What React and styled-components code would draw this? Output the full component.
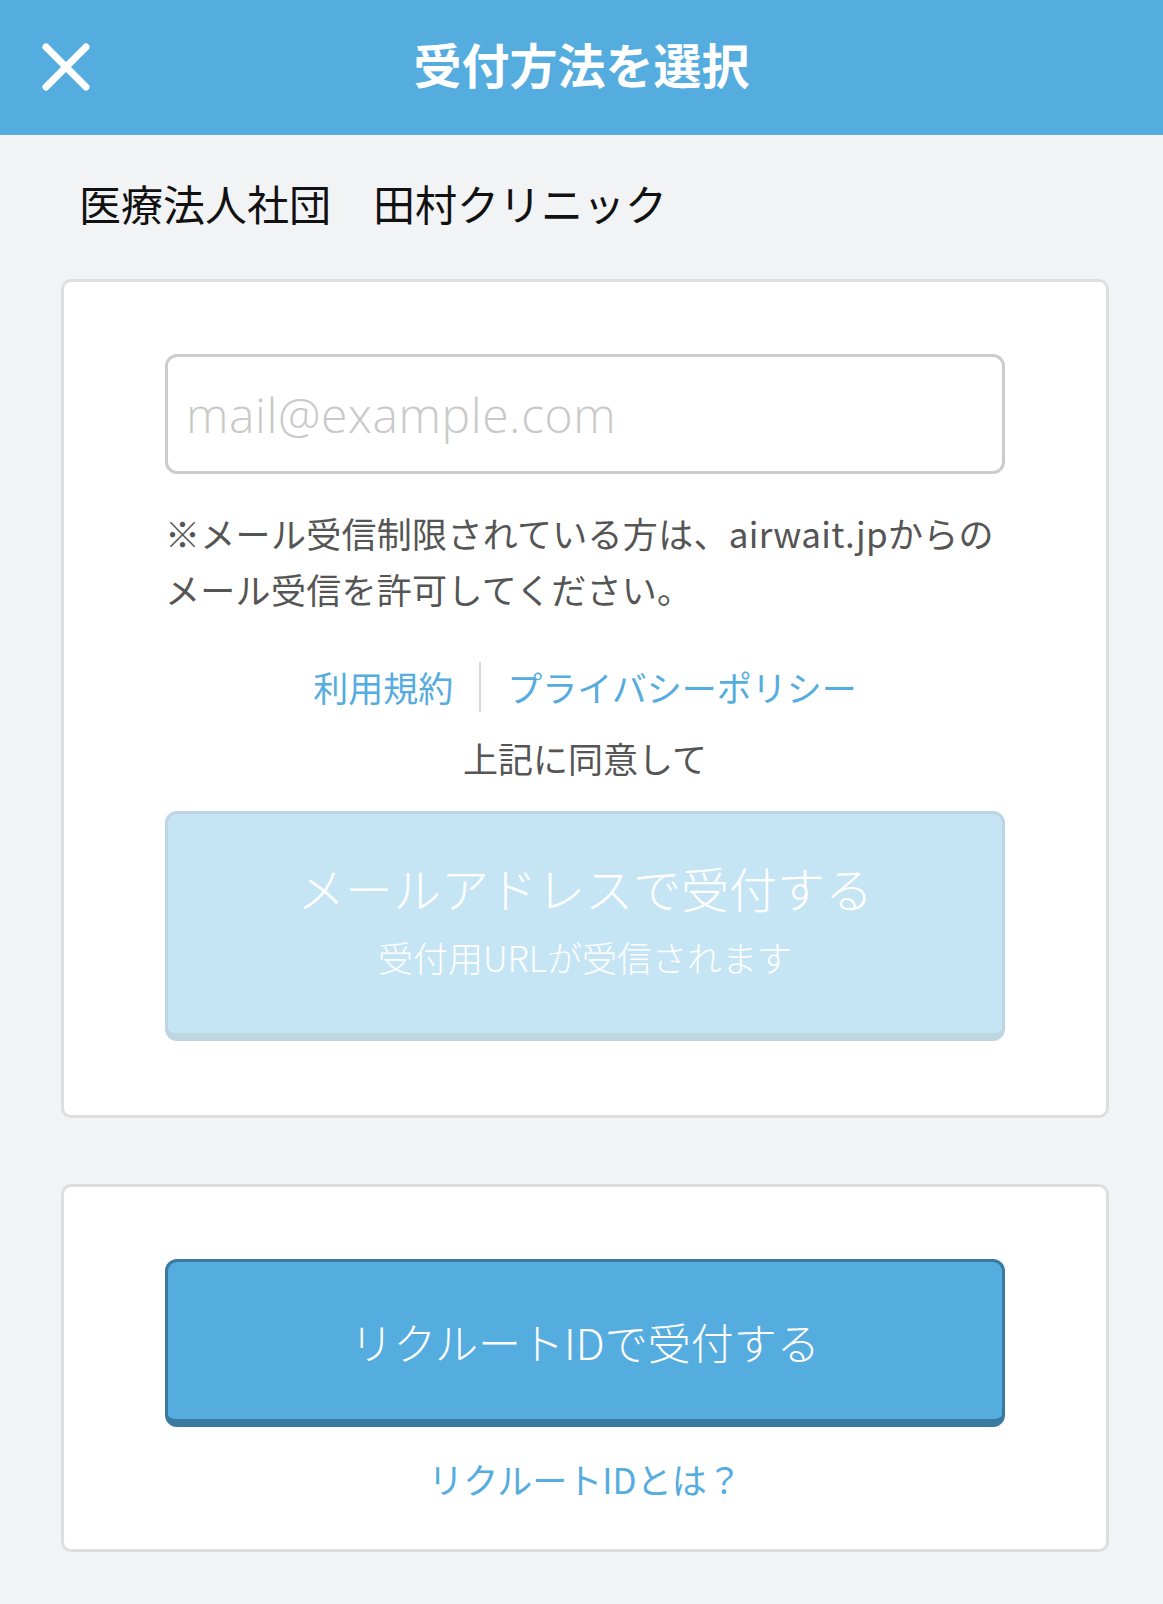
import React, { useState } from "react";
import styled, { createGlobalStyle } from "styled-components";

const GlobalStyle = createGlobalStyle`
  html, body {
    margin: 0;
    padding: 0;
    background: #f2f3f5;
  }
  body {
    font-family: "Noto Sans CJK JP", "Noto Sans", sans-serif;
    color: #222;
  }
  * { box-sizing: border-box; }
`;

export default function App() {
  const [email, setEmail] = useState("");

  return (
    <Page>
      <GlobalStyle />
      <Header>
        <CloseButton aria-label="閉じる">
          <svg width="50" height="50" viewBox="0 0 50 50">
            <path
              d="M5 5 L45 45 M45 5 L5 45"
              stroke="#fff"
              strokeWidth="7"
              strokeLinecap="round"
              fill="none"
            />
          </svg>
        </CloseButton>
        <Title>受付方法を選択</Title>
      </Header>

      <Content>
        <ClinicName>医療法人社団　田村クリニック</ClinicName>

        <Card $pb="74px">
          <EmailInput
            type="email"
            placeholder="mail@example.com"
            value={email}
            onChange={(e) => setEmail(e.target.value)}
          />
          <Notice>
            ※メール受信制限されている方は、airwait.jpからの
            <br />
            メール受信を許可してください。
          </Notice>

          <LinkRow>
            <TextLink href="#">利用規約</TextLink>
            <Divider />
            <TextLink href="#">プライバシーポリシー</TextLink>
          </LinkRow>
          <Agree>上記に同意して</Agree>

          <MailButton disabled>
            <MainLabel>メールアドレスで受付する</MainLabel>
            <SubLabel>受付用URLが受信されます</SubLabel>
          </MailButton>
        </Card>

        <Card $pb="42px">
          <RecruitButton>リクルートIDで受付する</RecruitButton>
          <HelpLink href="#">リクルートIDとは？</HelpLink>
        </Card>
      </Content>
    </Page>
  );
}

/* ========== styles ========== */

const Page = styled.main`
  min-height: 100vh;
  background: #f2f3f5;
`;

const Header = styled.header`
  position: relative;
  height: 135px;
  background: #55acdf;
  display: flex;
  align-items: center;
  justify-content: center;
`;

const CloseButton = styled.button`
  position: absolute;
  left: 41px;
  top: 42px;
  width: 50px;
  height: 50px;
  padding: 0;
  border: none;
  background: transparent;
  display: flex;
  cursor: pointer;
`;

const Title = styled.h1`
  margin: 0 0 10px;
  color: #fff;
  font-size: 48px;
  font-weight: 700;
  letter-spacing: 0;
`;

const Content = styled.div`
  padding: 0 54px 54px 61px;
`;

const ClinicName = styled.div`
  padding: 38px 0 0 18px;
  font-size: 42px;
  line-height: 59px;
  color: #111;
  margin-bottom: 47px;
`;

const Card = styled.section`
  background: #fff;
  border: 3px solid #dedede;
  border-radius: 10px;
  padding: 72px 101px ${(p) => p.$pb};
  display: flex;
  flex-direction: column;
  align-items: stretch;

  & + & {
    margin-top: 66px;
  }
`;

const EmailInput = styled.input`
  width: 100%;
  height: 120px;
  border: 3px solid #cccccc;
  border-radius: 12px;
  padding: 0 18px;
  font-family: "Open Sans", "Noto Sans CJK JP", sans-serif;
  font-weight: 300;
  font-size: 48px;
  letter-spacing: 0.6px;
  color: #333;
  outline: none;
  background: #fff;

  &::placeholder {
    color: #c9c9c9;
  }
`;

const Notice = styled.p`
  margin: 31px 0 0;
  font-size: 35px;
  line-height: 56px;
  letter-spacing: 0.3px;
  color: #555;
  white-space: nowrap;
`;

const LinkRow = styled.div`
  margin-top: 42px;
  display: flex;
  justify-content: center;
  align-items: center;
  height: 56px;
`;

const TextLink = styled.a`
  font-size: 35px;
  line-height: 56px;
  color: #55acdf;
  text-decoration: none;
`;

const Divider = styled.span`
  width: 2px;
  height: 50px;
  background: #d8d8d8;
  margin: 0 26px;
`;

const Agree = styled.p`
  margin: 15px 0 0;
  text-align: center;
  font-size: 35px;
  line-height: 56px;
  color: #555;
`;

const MailButton = styled.button`
  margin-top: 25px;
  height: 230px;
  width: 100%;
  padding: 0 0 12px;
  background: #c5e5f5;
  border: 3px solid #bdd6e2;
  border-bottom-width: 8px;
  border-radius: 12px;
  display: flex;
  flex-direction: column;
  align-items: center;
  justify-content: center;
  font-family: "Noto Sans CJK JP", sans-serif;
  color: #fff;
  cursor: default;
`;

const MainLabel = styled.span`
  font-size: 48px;
  font-weight: 300;
  line-height: 60px;
`;

const SubLabel = styled.span`
  font-size: 35px;
  font-weight: 300;
  line-height: 44px;
  margin-top: 18px;
`;

const RecruitButton = styled.button`
  height: 168px;
  width: 100%;
  background: #55acdf;
  border: 3px solid #3a7aa0;
  border-bottom-width: 8px;
  border-radius: 12px;
  font-family: "Noto Sans CJK JP", sans-serif;
  font-size: 43px;
  font-weight: 300;
  color: #fff;
  cursor: pointer;
`;

const HelpLink = styled.a`
  margin-top: 24px;
  text-align: center;
  font-size: 35px;
  line-height: 56px;
  color: #55acdf;
  text-decoration: none;
`;
